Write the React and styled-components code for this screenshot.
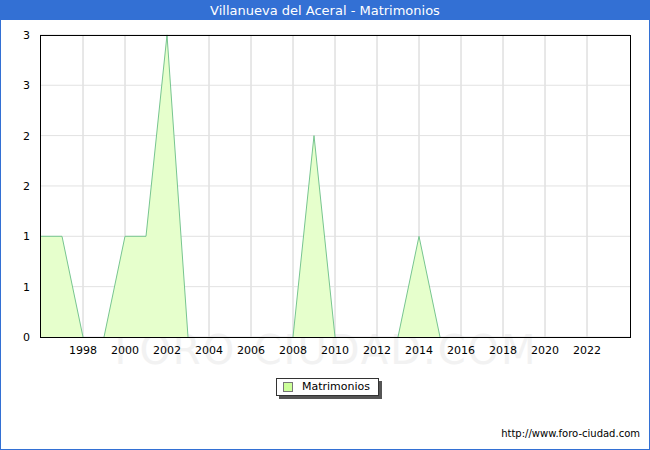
import React from "react";
import styled, { createGlobalStyle } from "styled-components";

const Global = createGlobalStyle`
  html, body { margin: 0; padding: 0; background: #fff; }
  body { font-family: "DejaVu Sans", Verdana, sans-serif; }
`;

const Frame = styled.div`
  width: 650px; height: 450px; box-sizing: border-box;
  border: 1px solid #3370d4; border-top: none;
  display: flex; flex-direction: column; background: #fff;
`;
const Title = styled.div`
  height: 20px; margin: 0 -1px; background: #3370d4; color: #fff;
  font-size: 13px; line-height: 22px; text-align: center;
`;
const Legend = styled.div`
  align-self: flex-start; margin: 0 0 0 275px;
  border: 1px solid #333; box-shadow: 3px 3px 0 #555;
  padding: 1px 8px 2px 6px; font-size: 11px; color: #000;
  display: flex; align-items: center; gap: 9px;
`;
const Swatch = styled.span`
  width: 8px; height: 8px; background: #ccff99; border: 1px solid #777;
`;
const Footer = styled.div`
  margin-top: auto; padding: 0 9px 10px 0; text-align: right;
  font-size: 10px; color: #000;
`;

const X0 = 40, DX = 21.0, Y0 = 317, DY = 100.7;
const px = (yr) => X0 + (yr - 1996) * DX;
const py = (v) => Y0 - v * DY;
const segs = [
  [[1996,1],[1997,1],[1998,0]],
  [[1999,0],[2000,1],[2001,1],[2002,3],[2003,0]],
  [[2008,0],[2009,2],[2010,0]],
  [[2013,0],[2014,1],[2015,0]],
];
const years = [1998,2000,2002,2004,2006,2008,2010,2012,2014,2016,2018,2020,2022];
const ys = [[0,"0"],[0.5,"1"],[1,"1"],[1.5,"2"],[2,"2"],[2.5,"3"],[3,"3"]];

function Chart() {
  return (
    <svg width="648" height="358" style={{ display: "block" }}>
      <text x="325" y="344" textAnchor="middle" fontSize="40" fill="#f2f2f2" fontFamily="DejaVu Sans" letterSpacing="2">FORO-CIUDAD.COM</text>
      {years.map((y) => <line key={y} x1={px(y)} x2={px(y)} y1="15" y2="317" stroke="#d0d0d0" />)}
      {ys.map(([v]) => <line key={v} x1="39" x2="629" y1={py(v)} y2={py(v)} stroke="#e2e2e2" />)}
      {segs.map((s, i) => (
        <g key={i}>
          <polygon points={`${px(s[0][0])},${py(0)} ` + s.map(([y, v]) => `${px(y)},${py(v)}`).join(" ")} fill="#e6ffcc" />
          <polyline points={s.map(([y, v]) => `${px(y)},${py(v)}`).join(" ")} fill="none" stroke="#77c590" />
        </g>
      ))}
      <rect x="39.5" y="15.5" width="590" height="302" fill="none" stroke="#000" />
      {ys.map(([v, l]) => <text key={v} x="29" y={py(v) + 4} fontSize="11" textAnchor="end" fill="#000">{l}</text>)}
      {years.map((y) => <text key={y} x={px(y)} y="334" fontSize="11" textAnchor="middle" fill="#000">{y}</text>)}
    </svg>
  );
}

export default function App() {
  return (
    <>
      <Global />
      <Frame>
        <Title>Villanueva del Aceral - Matrimonios</Title>
        <Chart />
        <Legend><Swatch />Matrimonios</Legend>
        <Footer>http://www.foro-ciudad.com</Footer>
      </Frame>
    </>
  );
}
